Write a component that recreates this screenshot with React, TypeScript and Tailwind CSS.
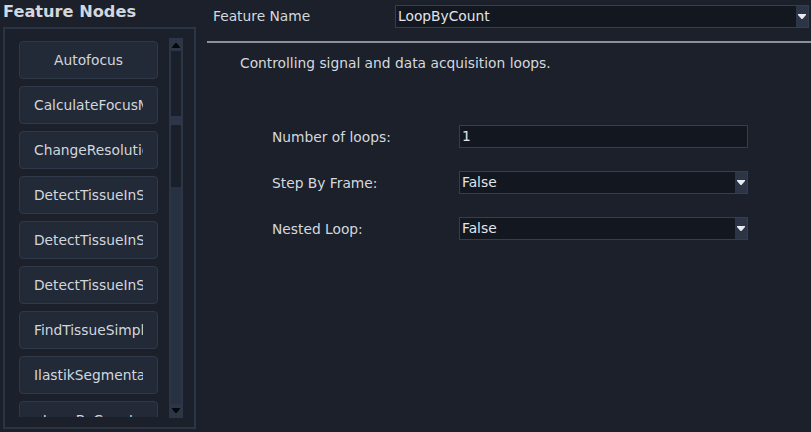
import React from 'react';

const nodes = [
  'Autofocus',
  'CalculateFocusMap',
  'ChangeResolution',
  'DetectTissueInSlide',
  'DetectTissueInScan',
  'DetectTissueInSection',
  'FindTissueSimple',
  'IlastikSegmentation',
  'LoopByCount',
];

function Arrow() {
  return (
    <svg width="8" height="5" viewBox="0 0 8 5">
      <path d="M0 0H8V1L4.5 5H3.5L0 1Z" fill="#e8ebf0" />
    </svg>
  );
}

function Combo({ value, className }: { value: string; className: string }) {
  return (
    <div className={`flex h-[23px] border border-[#343e4f] bg-[#121720] ${className}`}>
      <div className="flex-1 pl-[2px] leading-[21px] text-[#e2e5ea]">{value}</div>
      <div className="flex w-[12px] items-center justify-center bg-[#2c3545]">
        <Arrow />
      </div>
    </div>
  );
}

export default function App() {
  return (
    <div
      className="flex h-[432px] w-[811px] overflow-hidden bg-[#1b202a] text-[13.8px] text-[#d4d8df]"
      style={{ fontFamily: '"DejaVu Sans", Verdana, sans-serif' }}
    >
      {/* Feature list */}
      <div className="flex w-[200px] shrink-0 flex-col">
        <div className="h-[27px] pl-[3px] pt-[1px] text-[16.2px] font-bold leading-[22px] text-[#d3d7de]">
          Feature Nodes
        </div>
        <div className="ml-[3px] flex h-[402px] w-[193px] border-2 border-[#2c3544] pl-[14px] pt-[12px]">
          <div className="h-[376px] w-[139px] overflow-hidden">
            <div className="flex flex-col gap-[7px]">
              {nodes.map((n) => (
                <div
                  key={n}
                  className="h-[38px] shrink-0 overflow-hidden whitespace-nowrap rounded-[4px] border border-[#2f3949] bg-[#222a38] px-[14px] text-center leading-[36px] text-[#d2d6dd]"
                >
                  <div className="overflow-hidden">{n}</div>
                </div>
              ))}
            </div>
          </div>
          <div className="ml-[11px] mt-[-3px] flex h-[380px] w-[14px] flex-col border-2 border-[#2c3646] bg-[#1a1f29]">
            <div className="flex h-[11px] items-center justify-center bg-[#2c3646]">
              <svg width="8" height="5" viewBox="0 0 8 5">
                <path d="M3.5 0H4.5L8 4V5H0V4Z" fill="#05070a" />
              </svg>
            </div>
            <div className="h-[2px]" />
            <div className="flex flex-col bg-[#1a1f29]">
              <div className="h-[63px]" />
              <div className="h-[9px] bg-[#2c3646]" />
              <div className="h-[62px]" />
            </div>
            <div className="flex-1 bg-[#273142]" />
            <div className="flex h-[12px] items-center justify-center bg-[#2c3646]">
              <svg width="8" height="5" viewBox="0 0 8 5">
                <path d="M0 0H8V1L4.5 5H3.5L0 1Z" fill="#05070a" />
              </svg>
            </div>
          </div>
        </div>
      </div>

      {/* Feature settings */}
      <div className="flex flex-1 flex-col">
        <div className="flex h-[41px] items-start pt-[5px]">
          <div className="w-[195px] pl-[13px] leading-[23px]">Feature Name</div>
          <Combo value="LoopByCount" className="w-[414px]" />
        </div>
        <div className="ml-[7px] h-[2px] bg-[#8c9098]" />
        <div className="pl-[40px] pt-[11px] leading-[18px]">Controlling signal and data acquisition loops.</div>
        <div className="flex flex-col gap-[23px] pl-[72px] pt-[53px]">
          <div className="flex items-center">
            <div className="w-[187px] pt-[2px]">Number of loops:</div>
            <div className="h-[23px] w-[289px] border border-[#343e4f] bg-[#121720] pl-[2px] leading-[21px] text-[#e2e5ea]">
              1
            </div>
          </div>
          <div className="flex items-center">
            <div className="w-[187px] pt-[2px]">Step By Frame:</div>
            <Combo value="False" className="w-[289px]" />
          </div>
          <div className="flex items-center">
            <div className="w-[187px] pt-[2px]">Nested Loop:</div>
            <Combo value="False" className="w-[289px]" />
          </div>
        </div>
      </div>
    </div>
  );
}
